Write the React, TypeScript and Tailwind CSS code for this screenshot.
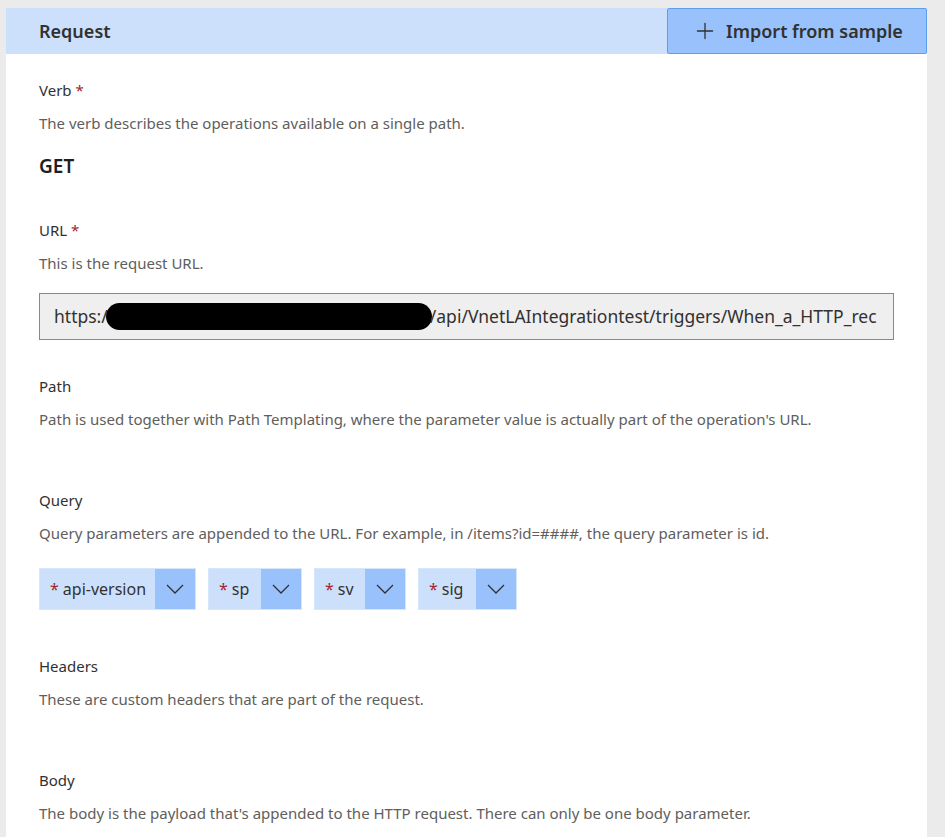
import React from "react";
import { Plus } from "lucide-react";

const font = { fontFamily: '"Segoe UI", "Noto Sans", "Open Sans", sans-serif' };

function Label({ text, required, className = "" }: { text: string; required?: boolean; className?: string }) {
  return (
    <div className={`text-[15px] leading-[20px] text-[#323130] ${className}`}>
      {text}
      {required && <span className="text-[#a4262c]"> *</span>}
    </div>
  );
}

function Desc({ text }: { text: string }) {
  return <div className="mt-[13px] text-[15px] leading-[20px] text-[#605e5c]">{text}</div>;
}

function Chevron() {
  return (
    <svg width="18" height="10" viewBox="0 0 18 10" fill="none">
      <polyline points="1,1 9,9 17,1" stroke="#323130" strokeWidth="1.3" />
    </svg>
  );
}

function Chip({ name, labelW }: { name: string; labelW: number }) {
  return (
    <div className="flex h-[42px] border border-[#d6e6fc]">
      <div className="flex items-center bg-[#cce0fc] pl-[10px] text-[16px] text-[#323130]" style={{ width: labelW }}>
        <span className="text-[#a4262c] mr-[4px]">*</span>
        {name}
      </div>
      <div className="flex w-[40px] items-center justify-center bg-[#99c2fc]">
        <Chevron />
      </div>
    </div>
  );
}

export default function App() {
  return (
    <div className="min-h-[837px] w-[945px] bg-[#ebebeb] pt-[8px] pl-[6px]" style={font}>
      <div className="w-[921px] h-[829px] bg-white overflow-hidden">
        <div className="flex h-[46px] items-stretch bg-[#cce0fc]">
          <div className="flex flex-1 items-center pl-[33px] text-[18px] font-semibold text-[#323130]">Request</div>
          <button className="flex w-[260px] items-center rounded-[2px] border border-[#5e9ef2] bg-[#99c2fc] pl-[24px] text-[18px] font-semibold text-[#323130]">
            <Plus size={26} strokeWidth={1.2} color="#323130" />
            <span className="ml-[8px]">Import from sample</span>
          </button>
        </div>
        <div className="pl-[33px] pr-[33px]">
          <Label text="Verb" required className="mt-[26px]" />
          <Desc text="The verb describes the operations available on a single path." />
          <div className="mt-[21px] text-[19px] leading-[24px] font-semibold text-[#201f1e]">GET</div>

          <Label text="URL" required className="mt-[42px]" />
          <Desc text="This is the request URL." />
          <div className="mt-[20px] flex h-[47px] w-[855px] items-center overflow-hidden whitespace-nowrap border border-[#8a8886] bg-[#efefef] pl-[14px] text-[17.5px] text-[#323130]">
            <span>https:/</span>
            <span className="mx-[-2px] inline-block h-[27px] w-[326px] shrink-0 rounded-[14px] bg-black" />
            <span>/api/VnetLAIntegrationtest/triggers/When_a_HTTP_rec</span>
          </div>

          <Label text="Path" className="mt-[36px]" />
          <Desc text="Path is used together with Path Templating, where the parameter value is actually part of the operation's URL." />

          <Label text="Query" className="mt-[61px]" />
          <Desc text="Query parameters are appended to the URL. For example, in /items?id=####, the query parameter is id." />
          <div className="mt-[25px] flex gap-[12px]">
            <Chip name="api-version" labelW={115} />
            <Chip name="sp" labelW={52} />
            <Chip name="sv" labelW={50} />
            <Chip name="sig" labelW={57} />
          </div>

          <Label text="Headers" className="mt-[46px]" />
          <Desc text="These are custom headers that are part of the request." />

          <Label text="Body" className="mt-[61px]" />
          <Desc text="The body is the payload that's appended to the HTTP request. There can only be one body parameter." />
        </div>
      </div>
    </div>
  );
}
